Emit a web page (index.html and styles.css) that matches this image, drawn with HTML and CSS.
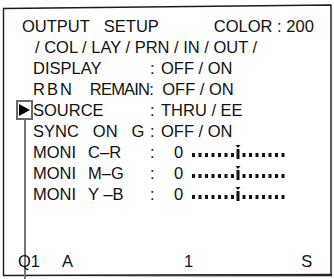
FILE: index.html
```html
<!DOCTYPE html>
<html lang="en">
<head>
  <meta charset="UTF-8" />
  <meta name="viewport" content="width=device-width, initial-scale=1.0" />
  <title>Output Setup</title>
  <link rel="stylesheet" href="styles.css">
</head>
<body>
  <div class="screen">
    <svg class="frame" width="334" height="279" viewBox="0 0 334 279">
      <defs>
        <linearGradient id="shade" x1="0" x2="1" y1="0" y2="0">
          <stop offset="0" stop-color="#222" stop-opacity="0" />
          <stop offset="1" stop-color="#222" stop-opacity="1" />
        </linearGradient>
      </defs>
      <polygon points="3.5,8.5 331,5 331,274.5 3.5,275.5" fill="none" stroke="#1a1a1a" stroke-width="1.4" />
      <line x1="60" y1="276" x2="332" y2="275" stroke="url(#shade)" stroke-width="2.4" />
    </svg>

    <div class="row title">
      <span>OUTPUT</span><span class="setup">SETUP</span><span class="color">COLOR : 200</span>
    </div>
    <div class="row tabs">/ COL / LAY / PRN / IN / OUT /</div>

    <div class="row item">
      <span class="lbl">DISPLAY</span><span class="sep">:</span><span class="val">OFF / ON</span>
    </div>
    <div class="row item">
      <span class="lbl auto"><span class="rbn">RBN</span><span class="remain">REMAIN</span></span><span class="sep tight">:</span><span class="val">OFF / ON</span>
    </div>
    <div class="row item current">
      <span class="marker"><span class="arrow"></span></span>
      <span class="lbl">SOURCE</span><span class="sep">:</span><span class="val">THRU / EE</span>
    </div>
    <div class="row item">
      <span class="lbl">SYNC<span class="w">ON</span><span class="w">G</span></span><span class="sep">:</span><span class="val">OFF / ON</span>
    </div>

    <div class="row item">
      <span class="lbl">MONI<span class="w2">C–R</span></span><span class="sep">:</span>
      <span class="val num">0 <svg class="scale" width="94" height="15" viewBox="0 0 94 15"><use href="#ticks" /></svg></span>
    </div>
    <div class="row item">
      <span class="lbl">MONI<span class="w2">M–G</span></span><span class="sep">:</span>
      <span class="val num">0 <svg class="scale" width="94" height="15" viewBox="0 0 94 15"><use href="#ticks" /></svg></span>
    </div>
    <div class="row item">
      <span class="lbl">MONI<span class="w2">Y –B</span></span><span class="sep">:</span>
      <span class="val num">0 <svg class="scale" width="94" height="15" viewBox="0 0 94 15"><use href="#ticks" /></svg></span>
    </div>

    <div class="row status">
      <span>Q1</span><span class="st-a">A</span><span class="st-1">1</span><span class="st-s">S</span>
    </div>

    <svg width="0" height="0" class="defs">
      <g id="ticks" fill="#111">
        <!-- left dots -->
        <rect x="0" y="8" width="3" height="4" />
        <rect x="6.5" y="8" width="3" height="4" />
        <rect x="13" y="8" width="3" height="4" />
        <rect x="19.5" y="8" width="3" height="4" />
        <rect x="26" y="8" width="3" height="4" />
        <rect x="32.5" y="8" width="3" height="4" />
        <rect x="39" y="8" width="3" height="4" />
        <!-- centre mark -->
        <polygon points="43.5,0 48.5,0 46,3" />
        <rect x="44.5" y="4" width="3" height="10" />
        <!-- right dots -->
        <rect x="50.5" y="8" width="3" height="4" />
        <rect x="57" y="8" width="3" height="4" />
        <rect x="63.5" y="8" width="3" height="4" />
        <rect x="70" y="8" width="3" height="4" />
        <rect x="76.5" y="8" width="3" height="4" />
        <rect x="83" y="8" width="3" height="4" />
        <rect x="89.5" y="8" width="3" height="4" />
      </g>
    </svg>
  </div>
</body>
</html>
```

FILE: styles.css
```css
body {
  margin: 0;
  padding: 0;
  background-color: #fff;
  color: #111;
  font-family: 'Liberation Sans', Arial, sans-serif;
  font-size: 16.5px;
  overflow: hidden;
}
.screen {
  position: relative;
  width: 334px;
  height: 279px;
  box-sizing: border-box;
  padding: 16px 0 0 16px;
  overflow: hidden;
}
.frame {
  position: absolute;
  left: 0;
  top: 0;
  pointer-events: none;
}
.defs {
  position: absolute;
}
.row {
  position: relative;
  display: flex;
  height: 21px;
  line-height: 21px;
  white-space: nowrap;
}
.title {
  padding-left: 6px;
}
.title .setup {
  margin-left: 14px;
}
.title .color {
  margin-left: 55px;
}
.tabs {
  padding-left: 19px;
}
.item {
  padding-left: 17px;
}
.lbl {
  width: 117px;
  flex-shrink: 0;
}
.lbl.auto {
  width: auto;
}
.rbn {
  letter-spacing: 2px;
}
.remain {
  margin-left: 16px;
  letter-spacing: -0.8px;
}
.w {
  margin-left: 14px;
}
.w2 {
  margin-left: 12px;
}
.sep {
  width: 11px;
  flex-shrink: 0;
}
.sep.tight {
  width: 13px;
}
.val.num {
  margin-left: 13px;
}
.scale {
  vertical-align: -2px;
  margin-left: 4px;
}
.item.current {
  padding-left: 0;
}
.marker {
  position: relative;
  box-sizing: border-box;
  width: 17px;
  height: 20px;
  border: 2px solid #6a6a6a;
  display: flex;
  align-items: center;
  padding-left: 1px;
}
.marker::after {
  content: '';
  position: absolute;
  left: 6px;
  top: calc(100% + 2px);
  width: 2px;
  height: 170px;
  background-color: #777;
}
.arrow {
  width: 0;
  height: 0;
  border-left: 11px solid #000;
  border-top: 6.5px solid transparent;
  border-bottom: 6.5px solid transparent;
}
.status {
  margin-top: 46px;
  padding-left: 2px;
}
.st-a {
  margin-left: 22px;
}
.st-1 {
  margin-left: 111px;
}
.st-s {
  margin-left: 108px;
}
```
